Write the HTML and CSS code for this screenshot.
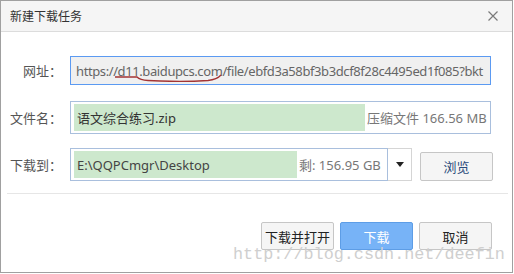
FILE: index.html
```html
<!DOCTYPE html>
<html lang="zh-CN">
<head>
    <meta charset="UTF-8">
    <title>新建下载任务</title>
    <link rel="stylesheet" href="styles.css">
</head>
<body>
<div class="dialog">
    <div class="titlebar">
        <span class="title">新建下载任务</span>
        <svg class="close" width="10" height="10" viewBox="0 0 10 10">
            <path d="M0.5 0.5 L9.5 9.5 M9.5 0.5 L0.5 9.5" stroke="#7a7a7a" stroke-width="1.2" fill="none"/>
        </svg>
    </div>

    <div class="form">
        <div class="row row-url">
            <label class="label">网址：</label>
            <div class="field url">https://d11.baidupcs.com/file/ebfd3a58bf3b3dcf8f28c4495ed1f085?bkt</div>
        </div>
        <div class="row row-name">
            <label class="label">文件名：</label>
            <div class="field name">
                <span class="fill fill-name">语文综合练习.zip</span>
                <span class="info">压缩文件 166.56 MB</span>
            </div>
        </div>
        <div class="row row-path">
            <label class="label">下载到：</label>
            <div class="field path">
                <span class="fill fill-path">E:\QQPCmgr\Desktop</span>
                <span class="info">剩: 156.95 GB</span>
            </div>
            <div class="drop">
                <svg width="8" height="5" viewBox="0 0 8 5"><path d="M0 0 L8 0 L4 5 Z" fill="#222"/></svg>
            </div>
            <button class="btn browse">浏览</button>
        </div>
    </div>

    <div class="sep"></div>

    <div class="actions">
        <button class="btn">下载并打开</button>
        <button class="btn primary">下载</button>
        <button class="btn">取消</button>
    </div>

    <svg class="scribble" width="513" height="273" viewBox="0 0 513 273">
        <path d="M115 77 L137 77 Q140 80 148 80.5 L160 81 Q185 82 208 80.5 Q217 79.5 221 75" stroke="#a33434" stroke-width="1.3" fill="none"/>
    </svg>
    <div class="watermark">http://blog.csdn.net/deefin</div>
</div>
</body>
</html>
```

FILE: styles.css
```css
body {
    margin: 0;
    background: #ffffff;
    font-family: "Noto Sans", "Noto Sans CJK SC", sans-serif;
    font-size: 13px;
    color: #333;
}

.dialog {
    position: relative;
    width: 511px;
    height: 271px;
    border: 1px solid #a0a0a0;
    background: #fff;
    overflow: hidden;
}

.titlebar {
    height: 30px;
    background: #f5f5f5;
    border-bottom: 1px solid #dcdcdc;
    display: flex;
    align-items: center;
    justify-content: space-between;
    padding: 0 14px 0 9px;
}

.title {
    font-size: 12px;
    color: #333;
}

.form {
    padding-top: 24px;
    display: flex;
    flex-direction: column;
}

.row {
    display: flex;
    align-items: center;
}

.row-name {
    margin-top: 16px;
}

.row-path {
    margin-top: 14px;
}

.label {
    width: 61px;
    text-align: right;
    color: #555;
    margin-right: 8px;
    flex-shrink: 0;
}

.field {
    box-sizing: border-box;
    width: 421px;
    border: 1px solid #a9bfdd;
    display: flex;
    align-items: center;
    white-space: nowrap;
    overflow: hidden;
}

.url {
    height: 29px;
    border-color: #5b9af2;
    background: #f0f0f0;
    color: #666;
    padding-left: 5px;
    letter-spacing: -0.4px;
}

.name, .path {
    height: 33px;
    padding: 2px 3px;
}

.path {
    width: 318px;
}

.fill {
    align-self: stretch;
    background: #cde8cd;
    display: flex;
    align-items: center;
    padding-left: 3px;
    color: #333;
    flex-shrink: 0;
}

.fill-name {
    width: 288px;
}

.fill-path {
    width: 220px;
    color: #444;
}

.info {
    padding-left: 2px;
    color: #777;
}

.drop {
    box-sizing: border-box;
    width: 24px;
    height: 33px;
    border: 1px solid #d5d5d5;
    border-left: none;
    display: flex;
    align-items: center;
    justify-content: center;
}

.btn {
    box-sizing: border-box;
    width: 73px;
    height: 28px;
    border: 1px solid #c6c6c6;
    border-radius: 2px;
    background: #f5f5f5;
    font-family: "Noto Sans CJK SC", sans-serif;
    font-size: 13px;
    color: #222;
    padding: 0;
}

.browse {
    height: 29px;
    margin-left: 8px;
    align-self: flex-end;
    color: #2a4a7a;
}

.primary {
    background: #77b3f7;
    border-color: #5d9de6;
    color: #fff;
}

.sep {
    height: 1px;
    background: #e6e6e6;
    margin: 12px 4px 0 6px;
}

.actions {
    display: flex;
    justify-content: flex-end;
    gap: 6px;
    padding: 28px 20px 0 0;
}

.scribble {
    position: absolute;
    left: -1px;
    top: -1px;
    pointer-events: none;
}

.watermark {
    position: absolute;
    left: 232px;
    top: 244px;
    font-family: "Liberation Mono", monospace;
    font-size: 16.8px;
    color: #cfcfcf;
    pointer-events: none;
}
```
